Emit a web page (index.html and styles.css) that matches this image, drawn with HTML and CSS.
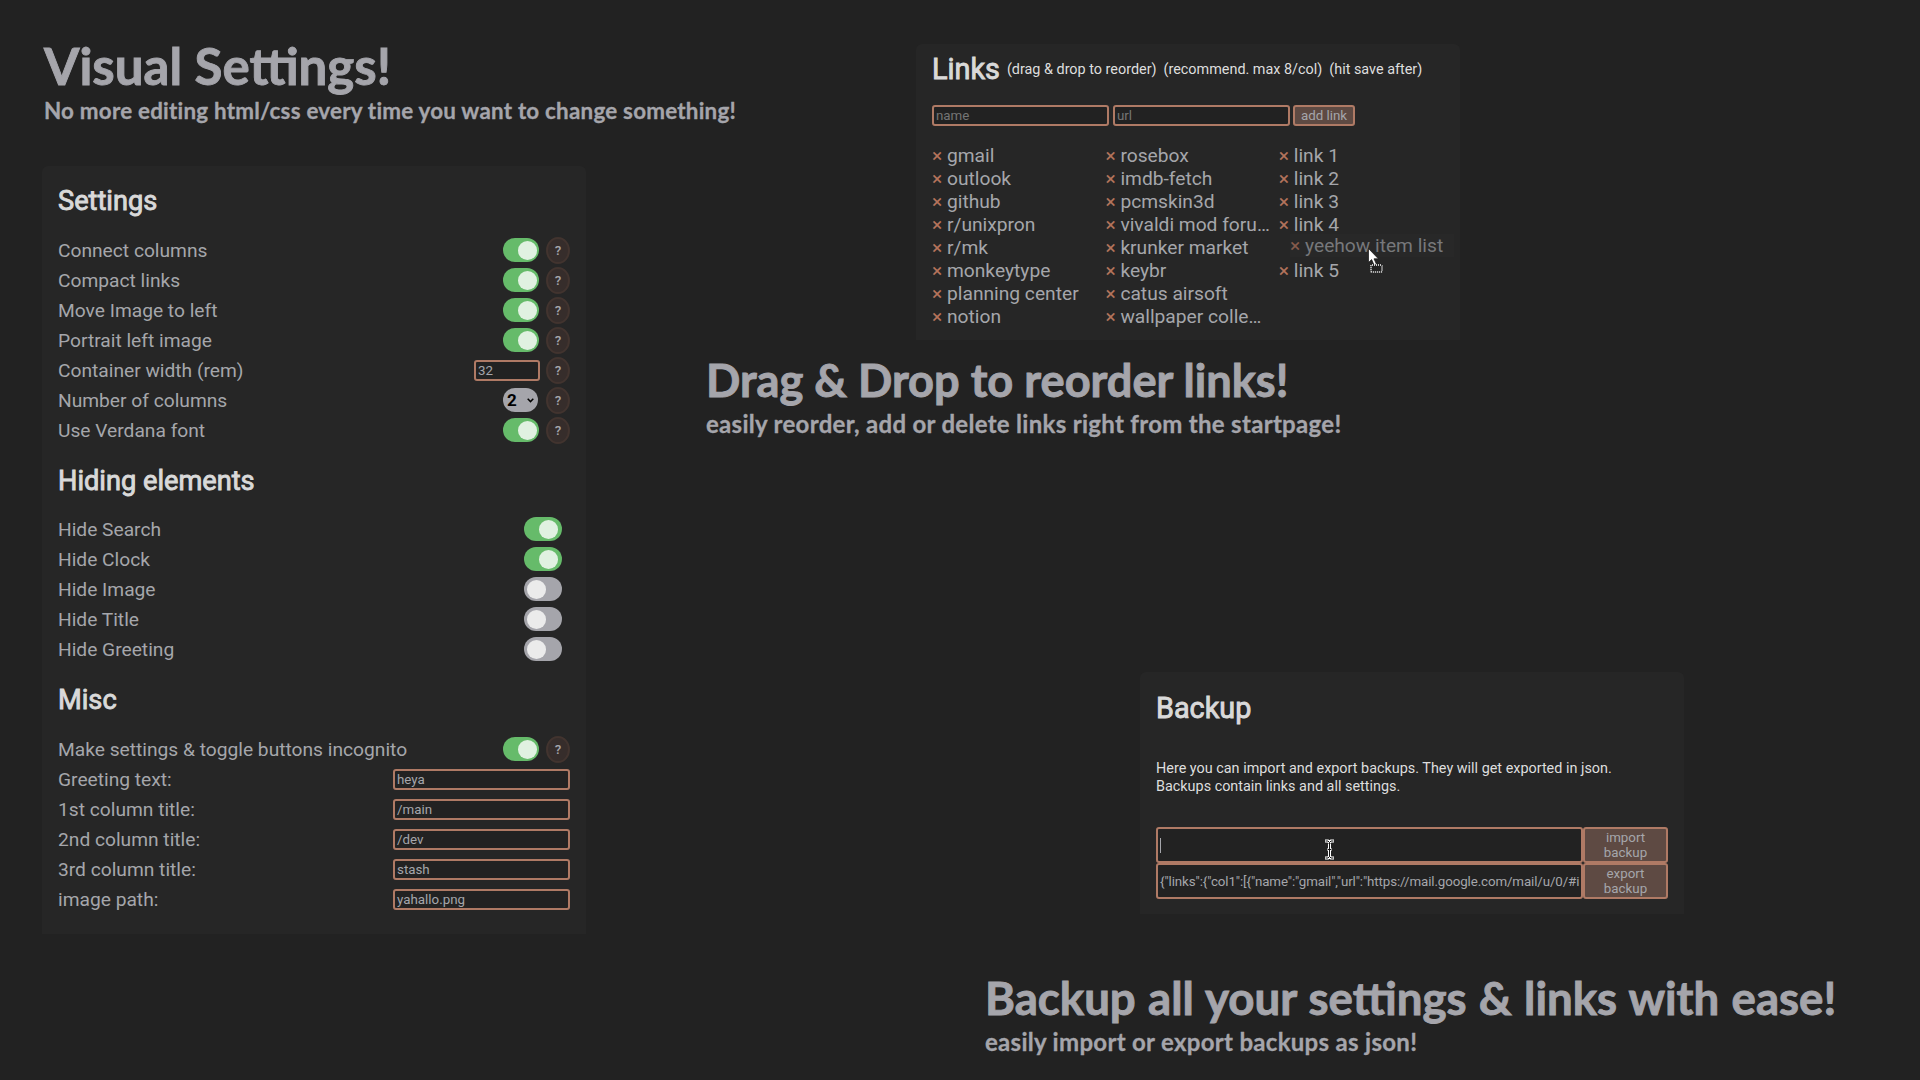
FILE: index.html
```html
<!DOCTYPE html>
<html lang="en">
<head>
<meta charset="utf-8">
<title>Startpage settings</title>
<link rel="stylesheet" href="styles.css">
</head>
<body>
<main class="page">
  <section class="left">
    <header class="promo promo-visual">
      <h1>Visual Settings!</h1>
      <p>No more editing html/css every time you want to change something!</p>
    </header>
    <div class="panel settings">
      <h2>Settings</h2>
      <div class="row"><span>Connect columns</span><span class="toggle on"></span><span class="help">?</span></div>
      <div class="row"><span>Compact links</span><span class="toggle on"></span><span class="help">?</span></div>
      <div class="row"><span>Move Image to left</span><span class="toggle on"></span><span class="help">?</span></div>
      <div class="row"><span>Portrait left image</span><span class="toggle on"></span><span class="help">?</span></div>
      <div class="row"><span>Container width (rem)</span><span class="field number">32</span><span class="help">?</span></div>
      <div class="row"><span>Number of columns</span><span class="select">2<svg width="7" height="5" viewBox="0 0 7 5"><path d="M0.7 0.8 3.5 3.6 6.3 0.8" fill="none" stroke="#000" stroke-width="1.5"/></svg></span><span class="help">?</span></div>
      <div class="row"><span>Use Verdana font</span><span class="toggle on"></span><span class="help">?</span></div>
      <h2>Hiding elements</h2>
      <div class="row hide"><span>Hide Search</span><span class="toggle on"></span></div>
      <div class="row hide"><span>Hide Clock</span><span class="toggle on"></span></div>
      <div class="row hide"><span>Hide Image</span><span class="toggle"></span></div>
      <div class="row hide"><span>Hide Title</span><span class="toggle"></span></div>
      <div class="row hide"><span>Hide Greeting</span><span class="toggle"></span></div>
      <h2>Misc</h2>
      <div class="row"><span>Make settings &amp; toggle buttons incognito</span><span class="toggle on"></span><span class="help">?</span></div>
      <div class="row"><span>Greeting text:</span><span class="field">heya</span></div>
      <div class="row"><span>1st column title:</span><span class="field">/main</span></div>
      <div class="row"><span>2nd column title:</span><span class="field">/dev</span></div>
      <div class="row"><span>3rd column title:</span><span class="field">stash</span></div>
      <div class="row"><span>image path:</span><span class="field">yahallo.png</span></div>
    </div>
  </section>

  <section class="right">
    <div class="panel links">
      <div class="links-head">
        <h2>Links</h2>
        <span>(drag &amp; drop to reorder)</span>
        <span>(recommend. max 8/col)</span>
        <span>(hit save after)</span>
      </div>
      <div class="links-form">
        <span class="field placeholder">name</span>
        <span class="field placeholder">url</span>
        <span class="button">add link</span>
      </div>
      <div class="columns">
        <ul>
          <li><i>×</i>gmail</li><li><i>×</i>outlook</li><li><i>×</i>github</li><li><i>×</i>r/unixpron</li>
          <li><i>×</i>r/mk</li><li><i>×</i>monkeytype</li><li><i>×</i>planning center</li><li><i>×</i>notion</li>
        </ul>
        <ul>
          <li><i>×</i>rosebox</li><li><i>×</i>imdb-fetch</li><li><i>×</i>pcmskin3d</li><li><i>×</i>vivaldi mod foru…</li>
          <li><i>×</i>krunker market</li><li><i>×</i>keybr</li><li><i>×</i>catus airsoft</li><li><i>×</i>wallpaper colle…</li>
        </ul>
        <ul>
          <li><i>×</i>link 1</li><li><i>×</i>link 2</li><li><i>×</i>link 3</li><li><i>×</i>link 4</li>
          <li class="slot"></li><li><i>×</i>link 5</li>
        </ul>
      </div>
      <div class="dragged"><i>×</i>yeehow item list</div>
      <svg class="cursor-drag" width="17" height="27" viewBox="0 0 17 27">
        <path d="M0.5 0.5V14.5L3.6 11.6 6.3 17.6 8.6 16.6 6 10.8H10.4Z" fill="#fff" stroke="#111" stroke-width="0.7"/>
        <rect x="2.5" y="16.5" width="12" height="8" rx="1" fill="#222"/>
        <rect x="3" y="17" width="11" height="7" rx="1" fill="none" stroke="#fff" stroke-width="1.6" stroke-dasharray="1 1"/>
      </svg>
    </div>
    <div class="promo promo-drag">
      <h1>Drag &amp; Drop to reorder links!</h1>
      <p>easily reorder, add or delete links right from the startpage!</p>
    </div>

    <div class="panel backup">
      <h2>Backup</h2>
      <p>Here you can import and export backups. They will get exported in json.<br>Backups contain links and all settings.</p>
      <div class="backup-grid">
        <span class="field focus"></span><span class="button">import<br>backup</span>
        <span class="field">{"links":{"col1":[{"name":"gmail","url":"https://mail.google.com/mail/u/0/#i</span><span class="button">export<br>backup</span>
      </div>
      <svg class="cursor-text" width="11" height="21" viewBox="0 0 11 21">
        <path d="M1 2H4L5.500 3.500 7 2H10M5.500 3.500V17.500M1 19H4L5.500 17.500 7 19H10M3.500 10.500H7.500" fill="none" stroke="#fff" stroke-width="3"/>
        <path d="M1.500 2H4L5.500 3.500 7 2H9.500M5.500 3.500V17.500M1.500 19H4L5.500 17.500 7 19H9.500M4 10.500H7" fill="none" stroke="#111" stroke-width="1"/>
      </svg>
    </div>
    <div class="promo promo-backup">
      <h1>Backup all your settings &amp; links with ease!</h1>
      <p>easily import or export backups as json!</p>
    </div>
  </section>
</main>
</body>
</html>
```
FILE: styles.css
```css
* { box-sizing: border-box; }
body {
  margin: 0;
  background: #222;
  color: #a5a6ab;
  font-family: Roboto, "Liberation Sans", sans-serif;
  font-size: 19.2px;
}
h1, h2, p, ul { margin: 0; padding: 0; font-weight: 400; }
i { font-style: normal; }

.page { display: flex; width: 1920px; height: 1080px; overflow: hidden; }
.left { width: 706px; padding: 36px 0 0 42px; }
.right { flex: 1; padding-top: 44px; display: flex; flex-direction: column; align-items: flex-start; }

/* Promo captions */
.promo { color: #a5a5ab; font-family: Lato, "Open Sans", sans-serif; white-space: nowrap; }
.promo h1 { font-weight: 700; font-size: 45.2px; line-height: 54px; -webkit-text-stroke: 0.9px #a5a5ab; }
.promo p { font-weight: 700; font-size: 24px; line-height: 30px; letter-spacing: 0.3px; -webkit-text-stroke: 0.3px #a5a5ab; }
.promo-visual { padding-left: 2px; margin-bottom: 40px; }
.promo-visual h1 { font-size: 51px; line-height: 60px; }
.promo-visual p { font-size: 22.4px; letter-spacing: 0.22px; }
.promo-drag { margin-top: 13px; }
.promo-drag h1 { margin-bottom: 2px; }
.promo-backup { margin: 57px 0 0 279px; }
.promo-backup h1 { font-size: 45.6px; word-spacing: 1.2px; margin-bottom: 2px; }

/* Panels */
.panel { width: 544px; background: #262626; border-radius: 6px 6px 0 0; padding: 0 16px; }
.panel h2 { color: #d9d9d9; -webkit-text-stroke: 0.9px #d9d9d9; font-size: 28.8px; line-height: 36px; }
.settings { height: 768px; }
.settings h2 { font-size: 27.2px; line-height: 68px; padding-top: 2px; }
.settings h2:first-child { line-height: 67px; }
.row + h2:nth-of-type(2) { line-height: 66px; padding-top: 3px; }

.row { display: flex; align-items: center; height: 30px; gap: 7px; white-space: nowrap; }
.row > span:first-child { margin-right: auto; }

.toggle { width: 36px; height: 24px; border-radius: 12px; background: #a5a5ab; padding: 3px; display: flex; }
.toggle::before { content: ""; width: 19px; height: 18.600px; border-radius: 50%; background: #ebebeb; }
.toggle.on { background: #66bb6a; justify-content: flex-end; padding-right: 2px; }
.toggle.on::before { background: #e0f1e1; }
.hide { padding-right: 8px; }
.hide .toggle { width: 38px; }
.hide .toggle.on { padding-right: 4px; }

.help {
  width: 24px; height: 27px; border-radius: 12px / 13.5px;
  background: #362d2b; border: 2px solid #42342f;
  font-size: 13.33px; font-weight: 500; line-height: 23px; text-align: center;
}
.field {
  width: 177px; height: 21px; padding: 0 2px; overflow: hidden;
  border: 2px solid #af7a65; border-radius: 3px; background: #222;
  font-size: 13.33px; line-height: 17px; white-space: nowrap;
}
.number { width: 66px; margin-right: -1px; }
.select {
  width: 35px; height: 24px; margin-right: 1px; padding: 0 4px; border-radius: 12px;
  background: #a5a5ab; color: #000;
  display: flex; align-items: center; justify-content: space-between;
  font-size: 17px; font-weight: 700;
}
.button {
  height: 21px; border: 2px solid #af7a65; border-radius: 3px; background: #5e4a43;
  font-size: 13.33px; line-height: 17px; text-align: center;
}
.placeholder { color: #757575; }

/* Links */
.links { position: relative; margin-left: 210px; height: 296px; padding-top: 7px; }
.links-head { display: flex; align-items: center; gap: 7px; color: #dedede; font-size: 14.4px; white-space: nowrap; }
.links-form { display: flex; gap: 4px; margin-top: 18px; }
.links-form .button { width: 62px; margin-left: -1px; }
.columns { display: grid; grid-template-columns: repeat(3, 173.4px); margin-top: 18px; }
.columns ul { list-style: none; }
.columns li, .dragged { height: 23px; line-height: 23px; white-space: nowrap; }
.columns i, .dragged i { display: inline-block; width: 15px; color: #b3735b; }
.dragged {
  position: absolute; left: 374px; top: 190px; width: 164px;
  background: #282828; color: #77787b;
}
.dragged i { color: #855b4c; }
.cursor-drag { position: absolute; left: 452px; top: 204px; }

/* Backup */
.backup { position: relative; margin: 233px 0 0 434px; height: 242px; padding-top: 18px; }
.backup p { margin: 34px 0 31px; color: #dedede; font-size: 14.4px; line-height: 18px; }
.backup-grid { display: grid; grid-template-columns: 427px 85px; grid-auto-rows: 36px; }
.backup-grid .field { width: auto; height: auto; line-height: 33px; letter-spacing: -0.11px; }
.backup-grid .button { height: auto; line-height: 15px; padding-top: 1px; }
.focus::before { content: ""; display: block; width: 1px; height: 15px; margin-top: 9px; background: #a5a6ab; }
.cursor-text { position: absolute; left: 184px; top: 167px; }
```
